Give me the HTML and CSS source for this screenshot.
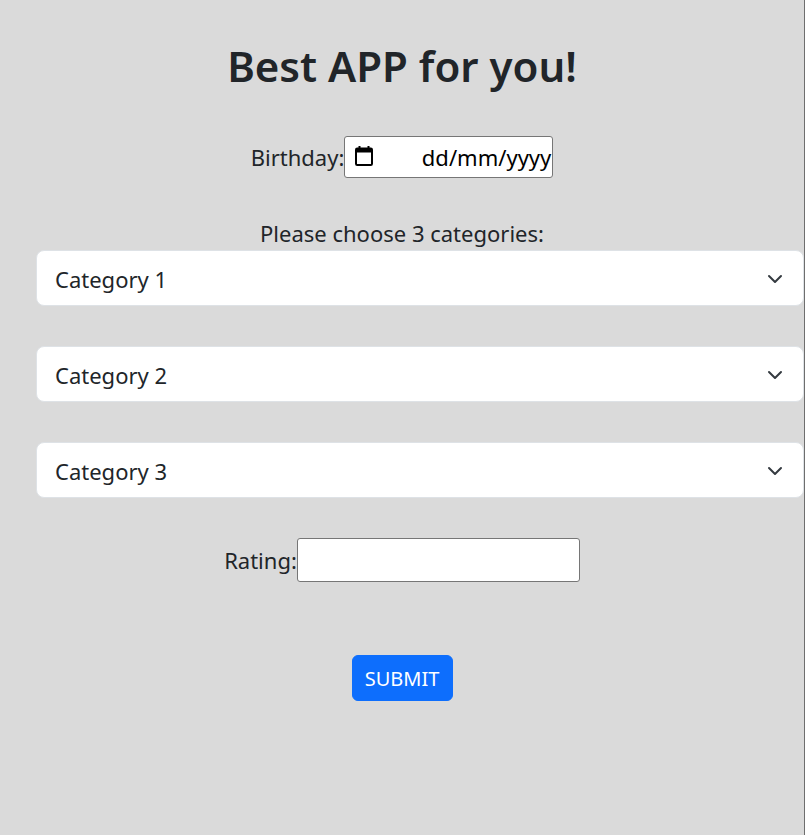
FILE: index.html
```html
<!DOCTYPE html>
<html lang="en">
<head>
<meta charset="utf-8">
<title>Best APP for you!</title>
<link rel="stylesheet" href="styles.css">
</head>
<body>
<div class="page">
  <h1 class="title">Best APP for you!</h1>
  <form class="form">
    <div class="inline-row">
      <label class="inline-label" for="birthday">Birthday:</label>
      <div class="date-input" id="birthday">
        <svg class="cal-icon" width="20" height="22" viewBox="0 0 20 22" aria-hidden="true">
          <rect x="2" y="3.5" width="16" height="16.5" rx="1.2" fill="none" stroke="#000" stroke-width="2"/>
          <rect x="2" y="3.5" width="16" height="4" fill="#000"/>
          <rect x="4.5" y="1" width="2" height="4" fill="#000"/>
          <rect x="13.5" y="1" width="2" height="4" fill="#000"/>
        </svg>
        <span class="date-text">dd/mm/yyyy</span>
      </div>
    </div>
    <p class="prompt">Please choose 3 categories:</p>
    <div class="select-list">
      <div class="select-wrap">
        <select class="cat-select"><option>Category 1</option></select>
        <svg class="chevron" width="16" height="12" viewBox="0 0 16 12" aria-hidden="true"><path d="M2 3l6 6 6-6" fill="none" stroke="#343a40" stroke-width="2" stroke-linecap="round" stroke-linejoin="round"/></svg>
      </div>
      <div class="select-wrap">
        <select class="cat-select"><option>Category 2</option></select>
        <svg class="chevron" width="16" height="12" viewBox="0 0 16 12" aria-hidden="true"><path d="M2 3l6 6 6-6" fill="none" stroke="#343a40" stroke-width="2" stroke-linecap="round" stroke-linejoin="round"/></svg>
      </div>
      <div class="select-wrap">
        <select class="cat-select"><option>Category 3</option></select>
        <svg class="chevron" width="16" height="12" viewBox="0 0 16 12" aria-hidden="true"><path d="M2 3l6 6 6-6" fill="none" stroke="#343a40" stroke-width="2" stroke-linecap="round" stroke-linejoin="round"/></svg>
      </div>
    </div>
    <div class="inline-row rating-row">
      <label class="inline-label" for="rating">Rating:</label>
      <input class="rating-input" id="rating" type="text">
    </div>
    <div class="submit-row">
      <button class="submit-btn" type="button">SUBMIT</button>
    </div>
  </form>
</div>
</body>
</html>
```
FILE: styles.css
```css
html, body {
  margin: 0;
  padding: 0;
  height: 100%;
  overflow: hidden;
}
body {
  background: #dadada;
  font-family: "Noto Sans", "Open Sans", sans-serif;
  color: #212529;
}
.page {
  width: 804px;
  height: 835px;
  border-right: 1px solid #6e6e6e;
  text-align: center;
}
.title {
  margin: 0;
  padding-top: 39px;
  font-size: 42px;
  font-weight: 600;
  line-height: 53px;
}
.form {
  margin: 0;
}
.inline-row {
  display: flex;
  justify-content: center;
  align-items: center;
  margin-top: 44px;
  font-size: 22px;
}
.inline-label {
  line-height: 30px;
}
.date-input {
  box-sizing: border-box;
  width: 209px;
  height: 42px;
  background: #fff;
  border: 1px solid #767676;
  border-radius: 3px;
  display: flex;
  align-items: center;
  justify-content: space-between;
  padding: 0 1px 0 9px;
}
.cal-icon {
  display: block;
  margin-top: -2px;
}
.date-text {
  color: #000;
  font-size: 22px;
  white-space: nowrap;
}
.prompt {
  margin: 40px 0 2px;
  font-size: 22px;
  line-height: 30px;
}
.select-list {
  display: flex;
  flex-direction: column;
  gap: 40px;
  padding-left: 36px;
}
.select-wrap {
  position: relative;
}
.cat-select {
  appearance: none;
  -webkit-appearance: none;
  display: block;
  box-sizing: border-box;
  width: 100%;
  height: 56px;
  margin: 0;
  padding: 13px 16px 11px 18px;
  font-family: inherit;
  font-size: 22px;
  line-height: 30px;
  color: #212529;
  background: #fff;
  border: 1px solid #dee2e6;
  border-radius: 8px;
  text-align: left;
}
.chevron {
  position: absolute;
  right: 21px;
  top: 23px;
  pointer-events: none;
}
.rating-row {
  margin-top: 40px;
}
.rating-input {
  box-sizing: border-box;
  width: 283px;
  height: 44px;
  margin: 0;
  background: #fff;
  border: 1px solid #767676;
  border-radius: 3px;
  font-size: 20px;
}
.submit-row {
  margin-top: 73px;
  display: flex;
  justify-content: center;
}
.submit-btn {
  box-sizing: border-box;
  width: 101px;
  height: 46px;
  padding: 0;
  font-family: inherit;
  font-size: 20px;
  color: #fff;
  background: #0d6efd;
  border: 1px solid #0d6efd;
  border-radius: 6px;
}
```
